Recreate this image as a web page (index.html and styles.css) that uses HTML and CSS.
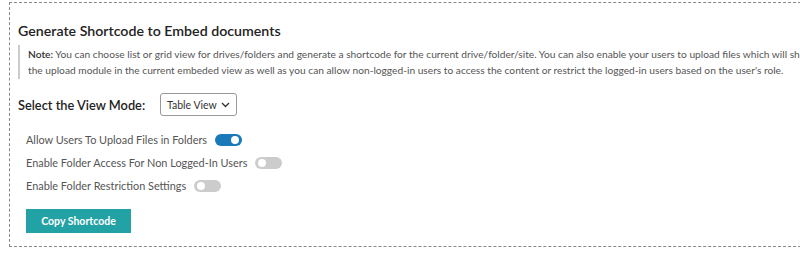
FILE: index.html
```html
<!DOCTYPE html>
<html>
<head>
<meta charset="utf-8">
<link rel="stylesheet" href="styles.css">
</head>
<body>
<div class="viewport">
  <div class="panel">
    <h2 class="title">Generate Shortcode to Embed documents</h2>
    <p class="note"><strong>Note:</strong> You can choose list or grid view for drives/folders and generate a shortcode for the current drive/folder/site. You can also enable your users to upload files which will show the upload module in the current embeded view as well as you can allow non-logged-in users to access the content or restrict the logged-in users based on the user's role.</p>
    <div class="mode-row">
      <label class="mode-label">Select the View Mode:</label>
      <div class="select">Table View
        <svg class="chev" width="9" height="6" viewBox="0 0 9 6"><path d="M1 1l3.5 3.5L8 1" fill="none" stroke="#333" stroke-width="1.3"/></svg>
      </div>
    </div>
    <div class="options">
      <div class="opt"><span>Allow Users To Upload Files in Folders</span><span class="toggle on"><span class="knob"></span></span></div>
      <div class="opt"><span>Enable Folder Access For Non Logged-In Users</span><span class="toggle"><span class="knob"></span></span></div>
      <div class="opt"><span>Enable Folder Restriction Settings</span><span class="toggle"><span class="knob"></span></span></div>
    </div>
    <button class="btn">Copy Shortcode</button>
  </div>
</div>
</body>
</html>
```
FILE: styles.css
```css
html, body {
  margin: 0;
  padding: 0;
  background: #fff;
  overflow: hidden;
}
body {
  font-family: "Lato", "Noto Sans", sans-serif;
  color: #333;
  width: 800px;
  height: 254px;
}
.viewport {
  padding: 2px 0 0 9px;
}
.panel {
  box-sizing: border-box;
  width: 822px;
  height: 245px;
  border: 1px dashed #888;
  padding: 0 8px;
}
.title {
  margin: 18px 0 0 0;
  font-size: 14.2px;
  font-weight: 600;
  color: #222;
  line-height: 20px;
}
.note {
  margin: 4px 0 0 0;
  border-left: 2px solid #ccc;
  padding: 1px 0 1px 8px;
  font-size: 10.2px;
  line-height: 16px;
  color: #555;
}
.note strong {
  font-weight: 600;
  color: #333;
}
.mode-row {
  display: flex;
  align-items: center;
  margin-top: 14px;
}
.mode-label {
  font-size: 12.8px;
  font-weight: 600;
  color: #222;
  width: 142px;
}
.select {
  box-sizing: border-box;
  height: 23px;
  width: 77px;
  border: 1px solid #999;
  border-radius: 3px;
  font-size: 10.5px;
  color: #333;
  display: flex;
  align-items: center;
  padding-left: 6px;
  gap: 4px;
}
.options {
  margin-top: 15px;
  padding-left: 8px;
  display: flex;
  flex-direction: column;
  gap: 5px;
}
.opt {
  display: flex;
  align-items: center;
  gap: 8px;
  font-size: 10.9px;
  color: #555;
  line-height: 18px;
}
.toggle {
  position: relative;
  width: 27px;
  height: 12px;
  border-radius: 6px;
  background: #ccc;
}
.toggle.on {
  background: #1a7ab9;
}
.knob {
  position: absolute;
  top: 2px;
  left: 3px;
  width: 8px;
  height: 8px;
  border-radius: 50%;
  background: #fff;
}
.toggle.on .knob {
  left: 16px;
}
.btn {
  display: block;
  margin: 14px 0 0 8px;
  width: 105px;
  height: 24px;
  border: none;
  background: #23a2a6;
  color: #fff;
  font-family: inherit;
  font-size: 10.5px;
  font-weight: 700;
  padding: 0;
}
```
